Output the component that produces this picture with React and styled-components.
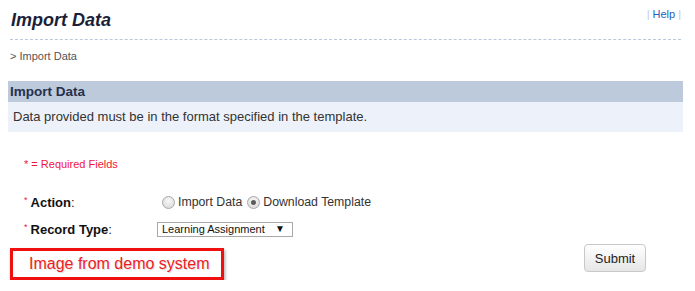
import React from "react";
import styled, { createGlobalStyle } from "styled-components";

const Global = createGlobalStyle`
  html, body { margin: 0; padding: 0; background: #fff; }
  body { font-family: Arial, "Liberation Sans", sans-serif; color: #333; }
`;

const Page = styled.div`
  width: 675px;
  padding: 0 8px;
`;

const TitleRow = styled.div`
  margin: 0 2px;
  height: 40px;
  box-sizing: border-box;
  border-bottom: 1px dashed #b9c9dc;
  display: flex;
  justify-content: space-between;
  align-items: flex-start;
`;

const Title = styled.h1`
  margin: 9px 0 0 1px;
  font-size: 18px;
  font-weight: bold;
  font-style: italic;
  color: #1c1f3a;
  line-height: 22px;
`;

const HelpLinks = styled.div`
  margin-top: 7px;
  font-size: 11px;
  color: #c0c8d8;
  line-height: 14px;
`;

const HelpLink = styled.a`
  color: #1f5fc0;
  text-decoration: none;
  margin: 0 3px;
`;

const Breadcrumb = styled.div`
  margin: 10px 0 0 2px;
  font-size: 11px;
  line-height: 13px;
  color: #555;
`;

const SectionHeader = styled.div`
  margin-top: 18px;
  height: 21px;
  background: #bccadb;
  font-size: 13.5px;
  font-weight: bold;
  color: #26304d;
  padding-left: 2px;
  line-height: 21px;
`;

const InfoBox = styled.div`
  height: 30px;
  background: #edf2fa;
  font-size: 13px;
  color: #333;
  padding-left: 5px;
  line-height: 30px;
`;

const Required = styled.div`
  margin: 26px 0 0 16px;
  font-size: 11px;
  line-height: 13px;
  color: #f0143c;
`;

const Form = styled.div`
  margin: 22px 0 0 16px;
  display: flex;
  flex-direction: column;
  gap: 9px;
`;

const Row = styled.div`
  display: grid;
  grid-template-columns: ${(p) => p.$labelWidth}px 1fr;
  align-items: center;
  height: 18px;
`;

const Label = styled.div`
  font-size: 13px;
  color: #111;
  display: flex;
  align-items: center;
`;

const Star = styled.span`
  color: #f0143c;
  font-size: 9px;
  margin-right: 3px;
  position: relative;
  top: -2px;
`;

const LabelText = styled.b`
  font-weight: bold;
`;

const Radios = styled.div`
  display: flex;
  align-items: center;
  font-size: 12.3px;
  color: #333;
`;

const RadioItem = styled.label`
  display: flex;
  align-items: center;
  margin-right: 5px;
`;

const Radio = styled.span`
  width: 13px;
  height: 13px;
  border-radius: 50%;
  box-sizing: border-box;
  border: 1px solid #a8a8a8;
  background: radial-gradient(circle at 50% 35%, #f8f8f8, #d6d6d6);
  margin-right: 3px;
  display: flex;
  align-items: center;
  justify-content: center;
`;

const Dot = styled.span`
  width: 5px;
  height: 5px;
  border-radius: 50%;
  background: #5a5a5a;
`;

const Select = styled.div`
  width: 136px;
  height: 15px;
  box-sizing: border-box;
  border: 1px solid #a9a9a9;
  display: flex;
  align-items: center;
  justify-content: space-between;
  padding: 0 7px 0 4px;
  font-size: 11px;
  color: #111;
`;

const Arrow = styled.span`
  font-size: 10px;
  line-height: 10px;
  color: #111;
`;

const Bottom = styled.div`
  margin-top: 6px;
  display: flex;
  justify-content: space-between;
  align-items: flex-start;
  padding-right: 37px;
`;

const DemoBox = styled.div`
  margin: 4px 0 0 2px;
  width: 214px;
  height: 32px;
  box-sizing: border-box;
  border: 3px solid #f01010;
  box-shadow: 1px 2px 3px rgba(0, 0, 0, 0.35);
  color: #ee1c25;
  font-size: 16px;
  padding-left: 16px;
  line-height: 25px;
  text-shadow: 1px 1px 1px rgba(0, 0, 0, 0.15);
`;

const SubmitButton = styled.button`
  width: 62px;
  height: 28px;
  border: 1px solid #c8c8c8;
  border-radius: 4px;
  background: linear-gradient(#ffffff, #e6e6e6);
  font-family: Arial, "Liberation Sans", sans-serif;
  font-size: 13px;
  color: #222;
  padding: 0;
`;

export default function App() {
  return (
    <Page>
      <Global />
      <TitleRow>
        <Title>Import Data</Title>
        <HelpLinks>
          |<HelpLink>Help</HelpLink>|
        </HelpLinks>
      </TitleRow>
      <Breadcrumb>&gt; Import Data</Breadcrumb>
      <SectionHeader>Import Data</SectionHeader>
      <InfoBox>Data provided must be in the format specified in the template.</InfoBox>
      <Required>* = Required Fields</Required>
      <Form>
        <Row $labelWidth={138}>
          <Label>
            <Star>*</Star>
            <LabelText>Action</LabelText>:
          </Label>
          <Radios>
            <RadioItem>
              <Radio />
              Import Data
            </RadioItem>
            <RadioItem>
              <Radio>
                <Dot />
              </Radio>
              Download Template
            </RadioItem>
          </Radios>
        </Row>
        <Row $labelWidth={133}>
          <Label>
            <Star>*</Star>
            <LabelText>Record Type</LabelText>:
          </Label>
          <Select>
            Learning Assignment
            <Arrow>▼</Arrow>
          </Select>
        </Row>
      </Form>
      <Bottom>
        <DemoBox>Image from demo system</DemoBox>
        <SubmitButton>Submit</SubmitButton>
      </Bottom>
    </Page>
  );
}
